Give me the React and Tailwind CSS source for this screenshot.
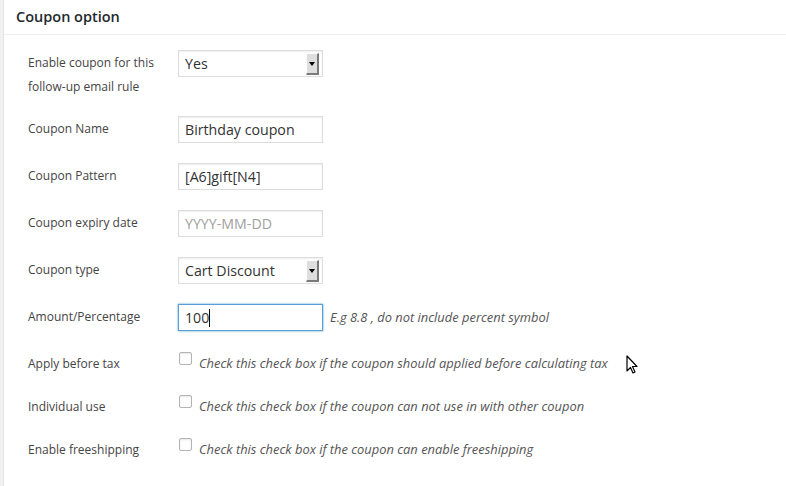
import React from 'react';

const inputBox =
  'w-[145px] h-[27px] border border-[#ddd] bg-white shadow-[inset_0_1px_2px_rgba(0,0,0,0.07)] px-[6px] flex items-center text-[14.2px] text-[#333]';

const SelectBox = ({ value }) => (
  <div className={inputBox + ' relative'}>
    <span>{value}</span>
    <div className="absolute right-[3px] top-[2px] w-[13px] h-[22px] bg-[#dedede] border-r-2 border-b-2 border-[#7a7a7a] border-t border-l border-t-white border-l-white flex items-center justify-center">
      <div className="w-0 h-0 border-l-[3px] border-r-[3px] border-t-[4px] border-l-transparent border-r-transparent border-t-black" />
    </div>
  </div>
);

const Row = ({ label, children, h }) => (
  <div className={'flex items-start ' + h}>
    <div className="w-[150px] pt-[1px] text-[12px] leading-6 text-[#444]">{label}</div>
    <div className="flex items-start">{children}</div>
  </div>
);

const CheckRow = ({ label, note }) => (
  <Row label={label} h="h-[43px]">
    <div className="flex items-start">
      <div className="mt-[1px] ml-[1px] w-[13px] h-[13px] border border-[#b4b4b4] rounded-[2px] bg-white shadow-[inset_0_1px_2px_rgba(0,0,0,0.1)]" />
      <span className="ml-[7px] text-[12.9px] leading-6 italic text-[#555]">{note}</span>
    </div>
  </Row>
);

export default function App() {
  return (
    <div className="w-[786px] h-[486px] overflow-hidden bg-[#f1f1f1] pl-[3px] font-['Open_Sans',sans-serif]">
      <div className="relative h-full bg-white border-l border-[#e5e5e5]">
        <div className="h-[35px] border-b border-[#eee] pl-[12px] flex items-center">
          <h2 className="text-[14.5px] font-semibold text-[#23282d]">Coupon option</h2>
        </div>
        <div className="pl-[24px] pt-[15px]">
          <Row label={<>Enable coupon for this<br />follow-up email rule</>} h="h-[66px]">
            <SelectBox value="Yes" />
          </Row>
          <Row label="Coupon Name" h="h-[47px]">
            <div className={inputBox}>Birthday coupon</div>
          </Row>
          <Row label="Coupon Pattern" h="h-[47px]">
            <div className={inputBox}>[A6]gift[N4]</div>
          </Row>
          <Row label="Coupon expiry date" h="h-[47px]">
            <div className={inputBox + ' text-[#a0a0a0]'}>YYYY-MM-DD</div>
          </Row>
          <Row label="Coupon type" h="h-[47px]">
            <SelectBox value="Cart Discount" />
          </Row>
          <Row label="Amount/Percentage" h="h-[47px]">
            <div className="w-[145px] h-[27px] border border-[#5b9dd9] bg-white shadow-[0_0_2px_rgba(30,140,190,0.8)] px-[6px] flex items-center text-[14.2px] text-[#333]">
              100<span className="inline-block w-px h-[18px] bg-black" />
            </div>
            <span className="ml-[7px] text-[12.9px] leading-[27px] italic text-[#555]">
              E.g 8.8 , do not include percent symbol
            </span>
          </Row>
          <CheckRow label="Apply before tax" note="Check this check box if the coupon should applied before calculating tax" />
          <CheckRow label="Individual use" note="Check this check box if the coupon can not use in with other coupon" />
          <CheckRow label="Enable freeshipping" note="Check this check box if the coupon can enable freeshipping" />
        </div>
        <svg className="absolute left-[622px] top-[355px]" width="13" height="20" viewBox="0 0 13 20">
          <path d="M1 1 L1 16 L4.5 12.5 L7 18 L9 17 L6.5 11.5 L11 11.5 Z" fill="white" stroke="black" strokeWidth="1.2" strokeLinejoin="round" />
        </svg>
      </div>
    </div>
  );
}
